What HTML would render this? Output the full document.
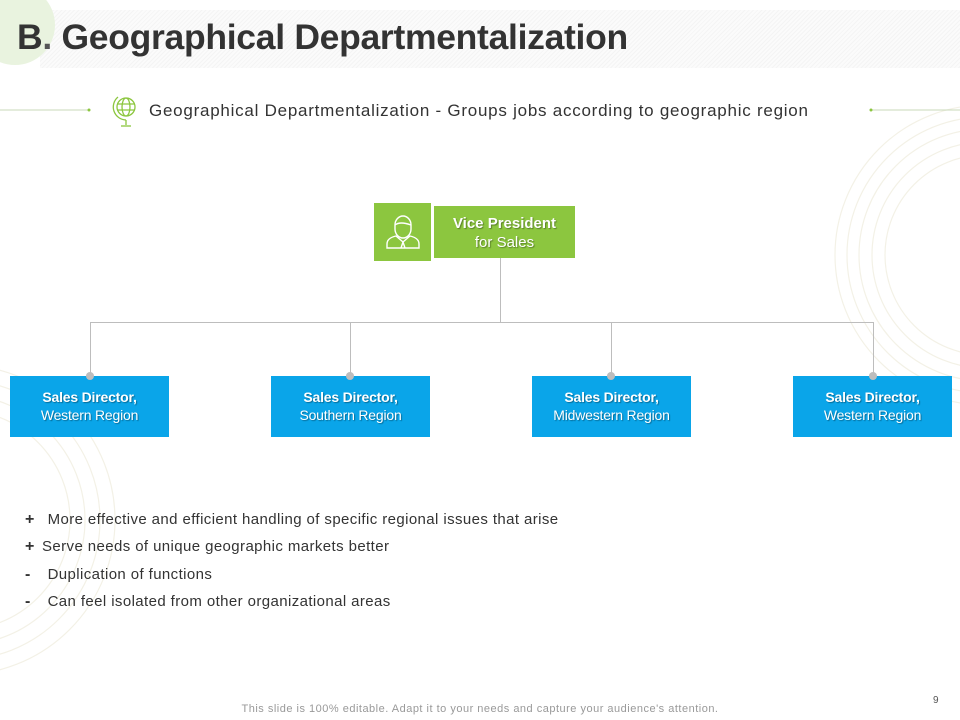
<!DOCTYPE html>
<html><head><meta charset="utf-8"><style>
*{margin:0;padding:0;box-sizing:border-box}
body{width:960px;height:720px;position:relative;overflow:hidden;background:#fff;font-family:"Liberation Sans",Arial,sans-serif}
.abs{position:absolute}
.band{left:40px;top:10px;width:920px;height:58px;background:repeating-linear-gradient(135deg,#f4f4f4 0 1px,#fbfbfb 1px 3px)}
.circ{left:-25px;top:-15px;width:80px;height:80px;border-radius:50%;background:#e9f3df}
h1{position:absolute;left:17px;top:17px;font-size:35.5px;font-weight:bold;color:#333;letter-spacing:-0.3px;white-space:nowrap}
.sub{left:149px;top:101px;font-size:17px;color:#333;letter-spacing:0.75px;white-space:nowrap}
.blue{background:#0aa5e9;color:#fff;text-align:center;font-size:14px;line-height:18px;padding-top:12px;text-shadow:1px 1px 1px rgba(0,0,0,.35);letter-spacing:-0.2px}
.line{background:#bdbdbd}
.dot{width:8px;height:8px;border-radius:50%;background:#bdbdbd}
.b{font-size:15px;color:#333;letter-spacing:0.4px;white-space:nowrap}
.b b{font-size:16px;display:inline-block;width:18px}
</style></head><body>
<svg class="abs" style="left:0;top:0" width="960" height="720">
<g fill="none" stroke="#f3f1e6" stroke-width="1.2">
<circle cx="985" cy="255" r="100"/><circle cx="985" cy="255" r="113"/><circle cx="985" cy="255" r="126"/><circle cx="985" cy="255" r="138"/><circle cx="985" cy="255" r="150"/>
<circle cx="-40" cy="520" r="110"/><circle cx="-40" cy="520" r="125"/><circle cx="-40" cy="520" r="140"/><circle cx="-40" cy="520" r="155"/>
</g>
<line x1="0" y1="110" x2="88" y2="110" stroke="#c8d8b8"/><circle cx="89" cy="110" r="1.5" fill="#8cc63f"/>
<line x1="872" y1="110" x2="960" y2="110" stroke="#c8d8b8"/><circle cx="871" cy="110" r="1.5" fill="#8cc63f"/>
<g fill="none" stroke="#8cc63f" stroke-width="1.3">
<circle cx="126" cy="107" r="9"/><ellipse cx="126" cy="107" rx="4" ry="9"/><line x1="117" y1="104" x2="135" y2="104"/><line x1="117" y1="110" x2="135" y2="110"/>
<path d="M118 97 A13 13 0 0 0 126 120"/><line x1="126" y1="120" x2="126" y2="125"/><line x1="121" y1="126" x2="131" y2="126"/>
</g>
</svg>
<div class="abs band"></div>
<div class="abs circ"></div>
<h1>B<span style="color:#555">.</span> Geographical Departmentalization</h1>
<div class="abs sub">Geographical Departmentalization - Groups jobs according to geographic region</div>

<div class="abs" style="left:374px;top:203px;width:57px;height:58px;background:#8cc63f"></div>
<svg class="abs" style="left:374px;top:203px" width="57" height="58"><g fill="none" stroke="#fff" stroke-width="1.4"><path d="M21 22 a8 9 0 0 1 16 0 v4 a8 9 0 0 1 -16 0z"/><path d="M21 22 q5 -4 16 0"/><path d="M13 45 v-4 q0 -6 9 -8 l7 6 l7 -6 q9 2 9 8 v4z"/><path d="M29 39 l-2 6 M29 39 l2 6"/></g></svg>
<div class="abs" style="left:434px;top:206px;width:141px;height:52px;background:#8cc63f;color:#fff;text-align:center;font-size:15px;line-height:19px;padding-top:8px;text-shadow:1px 1px 1px rgba(0,0,0,.35)"><b>Vice President</b><br>for Sales</div>

<div class="abs line" style="left:500px;top:258px;width:1px;height:64px"></div>
<div class="abs line" style="left:90px;top:322px;width:784px;height:1px"></div>
<div class="abs line" style="left:90px;top:322px;width:1px;height:54px"></div>
<div class="abs line" style="left:350px;top:322px;width:1px;height:54px"></div>
<div class="abs line" style="left:611px;top:322px;width:1px;height:54px"></div>
<div class="abs line" style="left:873px;top:322px;width:1px;height:54px"></div>

<div class="abs blue" style="left:10px;top:376px;width:159px;height:61px"><b>Sales Director,</b><br>Western Region</div>
<div class="abs blue" style="left:271px;top:376px;width:159px;height:61px"><b>Sales Director,</b><br>Southern Region</div>
<div class="abs blue" style="left:532px;top:376px;width:159px;height:61px"><b>Sales Director,</b><br>Midwestern Region</div>
<div class="abs blue" style="left:793px;top:376px;width:159px;height:61px"><b>Sales Director,</b><br>Western Region</div>
<div class="abs dot" style="left:86px;top:372px"></div>
<div class="abs dot" style="left:346px;top:372px"></div>
<div class="abs dot" style="left:607px;top:372px"></div>
<div class="abs dot" style="left:869px;top:372px"></div>

<div class="abs b" style="left:25px;top:511px"><b>+</b> More effective and efficient handling of specific regional issues that arise</div>
<div class="abs b" style="left:25px;top:538px"><b style="width:17px">+</b>Serve needs of unique geographic markets better</div>
<div class="abs b" style="left:25px;top:566px"><b>-</b> Duplication of functions</div>
<div class="abs b" style="left:25px;top:593px"><b>-</b> Can feel isolated from other organizational areas</div>

<div class="abs" style="left:933px;top:695px;font-size:10px;color:#555">9</div>
<div class="abs" style="left:0;width:960px;top:703px;text-align:center;font-size:11px;color:#999;letter-spacing:0.5px">This slide is 100% editable. Adapt it to your needs and capture your audience's attention.</div>
</body></html>
